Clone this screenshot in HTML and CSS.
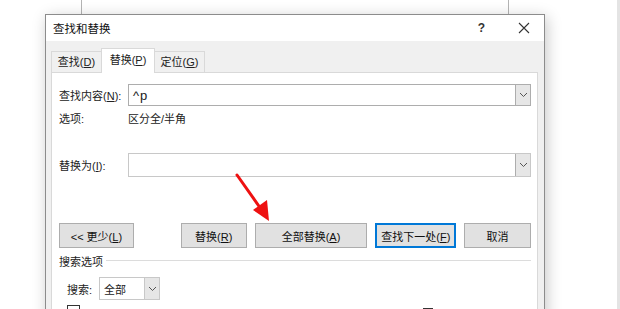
FILE: index.html
```html
<!DOCTYPE html>
<html lang="zh-CN">
<head>
    <meta charset="UTF-8">
    <title>查找和替换</title>
    <link rel="stylesheet" href="styles.css">
</head>
<body>
    <div class="desk">
        <span class="mark mark-left"></span>
        <span class="mark mark-right"></span>
        <span class="edge"></span>

        <div class="dialog">
            <div class="titlebar">
                <span class="title">查找和替换</span>
                <span class="help">?</span>
                <svg class="close" width="12" height="12" viewBox="0 0 12 12">
                    <path d="M1 1 L11 11 M11 1 L1 11" stroke="#333" stroke-width="1.1" fill="none"/>
                </svg>
            </div>
            <div class="dialog-body">
                <div class="tabs">
                    <div class="tab">查找(<u>D</u>)</div>
                    <div class="tab active">替换(<u>P</u>)</div>
                    <div class="tab">定位(<u>G</u>)</div>
                </div>
                <div class="panel">
                    <div class="row first">
                        <label class="lbl">查找内容(<u>N</u>):</label>
                        <div class="combo">
                            <span class="combo-text">^p</span>
                            <span class="drop"><svg width="9" height="6" viewBox="0 0 9 6"><path d="M1 1 L4.5 4.5 L8 1" stroke="#555" fill="none"/></svg></span>
                        </div>
                    </div>
                    <div class="row options">
                        <span class="lbl">选项:</span>
                        <span class="opt-val">区分全/半角</span>
                    </div>
                    <div class="row second">
                        <label class="lbl">替换为(<u>I</u>):</label>
                        <div class="combo tall">
                            <span class="combo-text"></span>
                            <span class="drop"><svg width="9" height="6" viewBox="0 0 9 6"><path d="M1 1 L4.5 4.5 L8 1" stroke="#555" fill="none"/></svg></span>
                        </div>
                    </div>
                    <div class="buttons">
                        <button class="btn less">&lt;&lt; 更少(<u>L</u>)</button>
                        <button class="btn replace">替换(<u>R</u>)</button>
                        <button class="btn all">全部替换(<u>A</u>)</button>
                        <button class="btn next">查找下一处(<u>F</u>)</button>
                        <button class="btn cancel">取消</button>
                    </div>
                    <div class="group">
                        <span class="group-title">搜索选项</span>
                        <span class="group-line"></span>
                    </div>
                    <div class="row search">
                        <span class="lbl">搜索:</span>
                        <div class="select">
                            <span class="combo-text">全部</span>
                            <span class="drop"><svg width="9" height="6" viewBox="0 0 9 6"><path d="M1 1 L4.5 4.5 L8 1" stroke="#555" fill="none"/></svg></span>
                        </div>
                    </div>
                    <div class="row checks">
                        <span class="check"></span>
                        <span class="check-right"></span>
                    </div>
                </div>
            </div>
        </div>

        <svg class="arrow" width="50" height="60" viewBox="0 0 50 60">
            <path d="M2 2 L26 36" stroke="#ee1111" stroke-width="3" fill="none" stroke-linecap="round"/>
            <path d="M18 37 L34 48 L32 27 Z" fill="#ee1111"/>
        </svg>
    </div>
</body>
</html>
```

FILE: styles.css
```css
* {
    box-sizing: border-box;
}

body {
    margin: 0;
    background: #fff;
    font-family: "Liberation Sans", "Noto Sans CJK SC", sans-serif;
    font-size: 11px;
    color: #1a1a1a;
    overflow: hidden;
}

u {
    text-decoration: underline;
    text-underline-offset: 1px;
}

.desk {
    position: relative;
    width: 620px;
    height: 309px;
    overflow: hidden;
}

.mark {
    position: absolute;
    top: 0;
    width: 1px;
    height: 14px;
    background: #b4b4b4;
}

.mark-left { left: 81px; }
.mark-right { left: 508px; }

.edge {
    position: absolute;
    top: 0;
    right: 0;
    width: 3px;
    height: 309px;
    background: #e4e4e4;
}

.dialog {
    position: absolute;
    left: 45px;
    top: 14px;
    width: 500px;
    height: 330px;
    border: 1px solid #8c8c8c;
    background: #f0f0f0;
    box-shadow: 2px 3px 14px rgba(0, 0, 0, 0.22);
}

.titlebar {
    height: 26px;
    background: #fff;
    display: flex;
    align-items: center;
    padding: 0 0 0 7px;
}

.title {
    flex: 1;
    font-size: 11.5px;
    color: #111;
}

.help {
    font-weight: bold;
    font-size: 12px;
    color: #333;
    margin-right: 33px;
}

.close {
    margin-right: 14px;
}

.dialog-body {
    padding: 7px 5px 0 5px;
}

.tabs {
    display: flex;
    align-items: flex-end;
    height: 24px;
}

.tab {
    height: 21px;
    line-height: 20px;
    width: 51px;
    text-align: center;
    white-space: nowrap;
    border: 1px solid #d9d9d9;
    border-bottom: none;
    background: #f0f0f0;
    color: #222;
}

.tab + .tab {
    margin-left: -1px;
}

.tab.active {
    height: 25px;
    line-height: 23px;
    width: 54px;
    background: #fff;
    position: relative;
    z-index: 1;
    margin-bottom: -1px;
}

.panel {
    height: 270px;
    width: 487px;
    background: #fff;
    border: 1px solid #d9d9d9;
    padding: 0 6px 0 7px;
}

.row {
    display: flex;
    align-items: center;
}

.lbl {
    width: 69px;
    flex-shrink: 0;
    white-space: nowrap;
    color: #222;
}

.row.first {
    margin-top: 11px;
}

.combo {
    flex: 1;
    height: 22px;
    border: 1px solid #adadad;
    display: flex;
    align-items: center;
    background: #fff;
}

.combo.tall {
    height: 24px;
    border-color: #c8c8c8;
}

.combo-text {
    flex: 1;
    padding-left: 4px;
    font-size: 13px;
    letter-spacing: 1px;
}

.drop {
    width: 15px;
    height: 100%;
    border-left: 1px solid #adadad;
    background: #e6e6e6;
    display: flex;
    align-items: center;
    justify-content: center;
}

.row.options {
    margin-top: 3px;
    height: 18px;
}

.opt-val {
    color: #222;
}

.row.second {
    margin-top: 26px;
}

.buttons {
    display: flex;
    margin-top: 46px;
}

.btn {
    height: 25px;
    border: 1px solid #adadad;
    background: #e1e1e1;
    font-family: "Liberation Sans", "Noto Sans CJK SC", sans-serif;
    font-size: 11px;
    color: #111;
    padding: 0;
    white-space: nowrap;
}

.btn.less { width: 75px; }
.btn.replace { width: 66px; margin-left: 47px; }
.btn.all { width: 113px; margin-left: 8px; }
.btn.next { width: 81px; margin-left: 8px; border: 2px solid #0078d7; }
.btn.cancel { width: 67px; margin-left: 8px; }

.group {
    display: flex;
    align-items: center;
    margin-top: 4px;
    height: 17px;
}

.group-title {
    color: #222;
}

.group-line {
    flex: 1;
    height: 1px;
    background: #dcdcdc;
    margin-left: 3px;
}

.row.search {
    margin-top: 8px;
    padding-left: 8px;
}

.row.search .lbl {
    width: 32px;
}

.select {
    width: 61px;
    height: 23px;
    border: 1px solid #c8c8c8;
    display: flex;
    align-items: center;
}

.select .combo-text {
    font-size: 11px;
    letter-spacing: 0;
}

.select .drop {
    border-left-color: #c8c8c8;
}

.row.checks {
    margin-top: 5px;
    padding-left: 8px;
    height: 12px;
    align-items: flex-start;
}

.check {
    width: 13px;
    height: 13px;
    border: 1px solid #333;
}

.check-right {
    margin-left: 343px;
    margin-top: 3px;
    width: 10px;
    height: 1px;
    background: #333;
}

.arrow {
    position: absolute;
    left: 235px;
    top: 173px;
}
```
